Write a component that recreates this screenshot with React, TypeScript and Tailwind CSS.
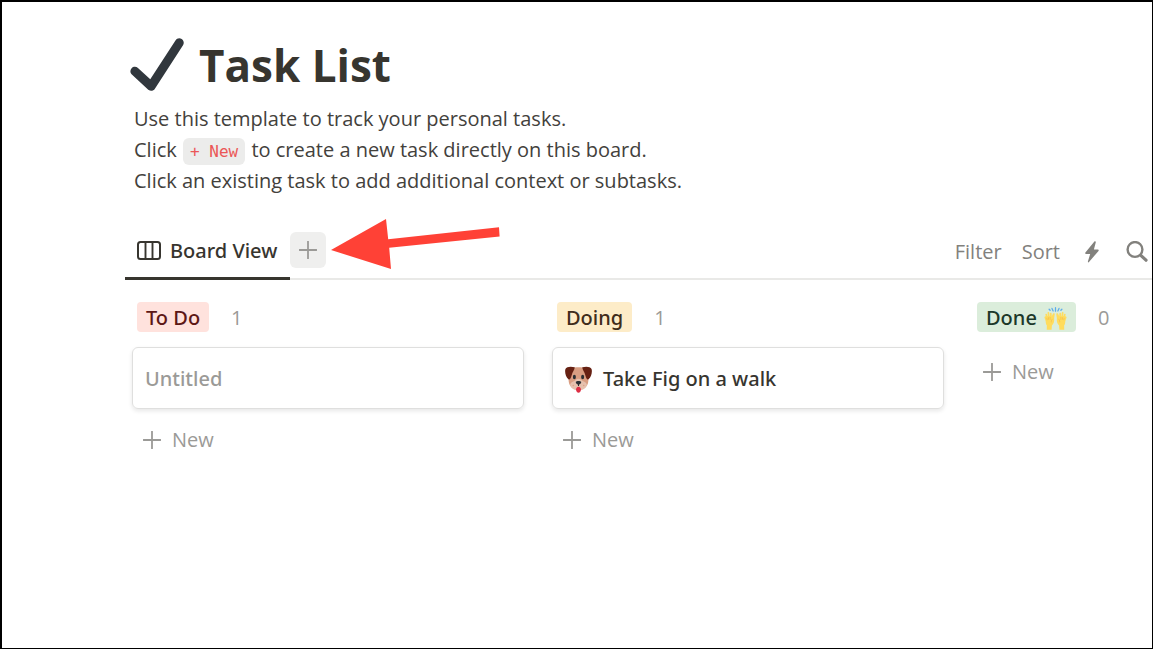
import { useState } from "react";

type Card = { title: string; icon?: boolean };
type Column = {
  name: string;
  hands?: boolean;
  tag: string;
  cards: Card[];
};

const columns: Column[] = [
  { name: "To Do", tag: "bg-[#ffe2dd] text-[#5d1715]", cards: [{ title: "" }] },
  {
    name: "Doing",
    tag: "bg-[#fdecc8] text-[#402c1b]",
    cards: [{ title: "Take Fig on a walk", icon: true }],
  },
  { name: "Done", hands: true, tag: "bg-[#dbeddb] text-[#1c3829]", cards: [] },
];

function CheckIcon() {
  return (
    <svg viewBox="0 0 36 36" className="size-[54px] shrink-0" aria-hidden="true">
      <path
        fill="#31373d"
        d="M34.459 1.375c-1.391-.902-3.248-.506-4.149.884L13.5 28.17l-8.198-7.58c-1.217-1.125-3.114-1.051-4.239.166-1.125 1.216-1.051 3.114.166 4.239l10.764 9.952s.309.266.452.359c.504.328 1.07.484 1.63.484.982 0 1.945-.482 2.52-1.368L35.343 5.524c.902-1.39.506-3.248-.884-4.149z"
      />
    </svg>
  );
}

function BoardIcon() {
  return (
    <svg viewBox="0 0 24 20" className="h-5 w-6 shrink-0" fill="none" stroke="#37352f" aria-hidden="true">
      <rect x="1" y="1" width="22" height="17" rx="2.5" strokeWidth="2" />
      <path d="M8.5 1v17M15.5 1v17" strokeWidth="1.9" />
    </svg>
  );
}

function PlusIcon() {
  return (
    <svg viewBox="0 0 18 18" className="size-[18px] shrink-0" stroke="currentColor" fill="none" aria-hidden="true">
      <path d="M9 .5v17M.5 9h17" strokeWidth="1.8" strokeLinecap="round" />
    </svg>
  );
}

function BoltIcon() {
  return (
    <svg viewBox="0 0 14 22" className="h-[22px] w-3.5" fill="currentColor" aria-hidden="true">
      <path d="M9.4.6.4 11.6c-.4.6-.2 1.3.6 1.3h4.2L2.9 20.5c-.2.9.5 1.3 1.1.6l9.5-11.2c.5-.6.2-1.3-.6-1.3H8.9l1.9-7.3C11 .4 10-.1 9.4.6z" />
    </svg>
  );
}

function SearchIcon() {
  return (
    <svg viewBox="0 0 22 22" className="size-[22px]" stroke="currentColor" fill="none" aria-hidden="true">
      <circle cx="9" cy="8.5" r="7.4" strokeWidth="2.4" />
      <path d="M14.8 14.3l5.2 4.9" strokeWidth="3.2" strokeLinecap="round" />
    </svg>
  );
}

function DogIcon() {
  return (
    <svg viewBox="0 0 36 36" className="size-[27px] shrink-0" aria-hidden="true">
      <path fill="#d99e82" d="M9 3c3-2 15-2 18 0 4 4 5 11 4 18-1 6-5 11-13 11S6 27 5 21C4 14 5 7 9 3z" />
      <path fill="#662113" d="M13 1.800C8 .2 2 .8.600 4c-1.300 4 .4 11 4 13.800 2.400.8 3.300-2.300 4.200-5.300C9.800 8.500 13 5 13 1.800zM23 1.800C28 .2 34 .8 35.400 4c1.300 4-.4 11-4 13.800-2.400.8-3.300-2.300-4.200-5.300C26.200 8.500 23 5 23 1.800z" />
      <path fill="#e6c1ae" d="M18 17c-3 0-4 2.500-7 3.500-3 1-4.500 3-4 5.500 2 4.500 6 6.500 11 6.500s9-2 11-6.500c.5-2.500-1-4.500-4-5.500-3-1-4-3.500-7-3.500z" />
      <ellipse cx="12.500" cy="14.500" rx="2" ry="3" fill="#292f33" />
      <ellipse cx="23.500" cy="14.500" rx="2" ry="3" fill="#292f33" />
      <path fill="#292f33" d="M14.500 21c1-1.500 6-1.500 7 0 .6 1.600-1 3-2.800 3.900v1.600h-1.400v-1.600C15.500 24 13.900 22.600 14.500 21z" />
      <path fill="#dd2e44" d="M18 27.500c1.500 0 3.300 1.500 3.300 3.700S19.800 35.500 18 35.500s-3.300-2.100-3.300-4.300 1.800-3.700 3.300-3.700z" />
      <g fill="#d99e82">
        <circle cx="11" cy="26" r=".9" />
        <circle cx="25" cy="26" r=".9" />
      </g>
    </svg>
  );
}

function Hand() {
  return (
    <g>
      <path fill="#ffdc5d" d="M3.500 19.500c-1.200-2.500-.2-5 2-5.500L12 15l2-4.500c1-1.200 3-.6 2.800 1l-.9 6c.3 5-.5 8.500-3.500 11.500l-.5 6.500H4.300l.2-6.500C2.500 26 2.300 23 3.500 19.500z" />
      <g stroke="#ffdc5d" strokeWidth="2.700" strokeLinecap="round">
        <path d="M2 16l2 6M3.500 11.800l2 8M6.800 9l1.200 9M10.600 10.200l.4 8" />
      </g>
      <path stroke="#efb048" strokeWidth=".8" fill="none" d="M4.300 17l.8 3.500M6.800 16l.5 4M9.500 15.500l.2 4.500M13.500 18.500c-1.700 1.500-2.200 3.500-2 5.500" />
    </g>
  );
}

function HandsIcon() {
  return (
    <svg viewBox="0 0 36 36" className="size-[23px] shrink-0" aria-hidden="true">
      <Hand />
      <g transform="matrix(-1 0 0 1 36 0)">
        <Hand />
      </g>
      <path fill="none" stroke="#5dadec" strokeWidth="2" strokeLinecap="round" d="M18 1v5.500M12.500 2.200l1.800 4M23.500 2.200l-1.800 4M8 3.500l1.600 1.600M28 3.500l-1.600 1.600" />
    </svg>
  );
}

function Arrow() {
  return (
    <svg
      viewBox="0 0 169 50"
      className="pointer-events-none absolute top-[-13px] left-[41px] h-[50px] w-[169px]"
      aria-hidden="true"
    >
      <path fill="#ff4136" d="M0 31L55 0l2.200 20.200L168 8.300l.6 9.200L58.200 28.800 60 50z" />
    </svg>
  );
}

function NewButton({ onClick }: { onClick: () => void }) {
  return (
    <button type="button" onClick={onClick} className="flex h-8 items-center gap-[11px] self-start pl-[11px] text-[#9b9a97]">
      <PlusIcon />
      <span>New</span>
    </button>
  );
}

export default function App() {
  const [board, setBoard] = useState(columns);

  const addCard = (name: string) => {
    setBoard((prev) =>
      prev.map((c) => (c.name === name ? { ...c, cards: [...c.cards, { title: "" }] } : c))
    );
  };

  return (
    <main className="min-h-screen overflow-hidden border-t-2 border-r border-b border-l-2 border-black bg-white pt-[34px] pl-[123px] font-['Open_Sans','Noto_Sans',sans-serif] text-[20px] text-[#37352f]">
      <header className="pl-[5px]">
        <div className="flex h-14 items-center gap-[15px]">
          <CheckIcon />
          <h1 className="pt-0.5 text-[44px] leading-[56px] font-bold">Task List</h1>
        </div>
        <div className="mt-[11px] pl-1 text-[20px] leading-[31px] text-[#43413c]">
          <p>Use this template to track your personal tasks.</p>
          <p>
            Click{" "}
            <code className="mx-px rounded-md bg-[#ececeb] px-[7px] py-1 font-['DejaVu_Sans_Mono',monospace] text-[16px] leading-none text-[#eb5757]">
              + New
            </code>{" "}
            to create a new task directly on this board.
          </p>
          <p>Click an existing task to add additional context or subtasks.</p>
        </div>
      </header>

      {/* View tabs */}
      <div className="mt-[29px] flex h-[55px] justify-between border-b-2 border-[#e9e9e7]">
        <div className="flex items-start">
          <button
            type="button"
            className="flex h-[55px] w-[165px] items-center gap-[9px] border-b-3 border-[#37352f] pl-3 font-['Noto_Sans',sans-serif] font-medium whitespace-nowrap"
          >
            <BoardIcon />
            Board View
          </button>
          <div className="relative mt-[7px]">
            <button
              type="button"
              aria-label="Add view"
              className="flex size-9 items-center justify-center rounded-md bg-[#efefee] text-[#9b9a97]"
            >
              <PlusIcon />
            </button>
            <Arrow />
          </div>
        </div>
        <div className="flex h-[53px] items-center pr-1 text-[#82817d]">
          <button type="button">Filter</button>
          <button type="button" className="ml-5">Sort</button>
          <button type="button" aria-label="Automations" className="ml-[25px]">
            <BoltIcon />
          </button>
          <button type="button" aria-label="Search" className="ml-[27px]">
            <SearchIcon />
          </button>
        </div>
      </div>

      {/* Board columns */}
      <div className="flex gap-7 pt-[22px] pl-[7px]">
        {board.map((column) => (
          <section key={column.name} className="flex w-[392px] shrink-0 flex-col">
            <div className="flex h-[30px] items-center gap-[22px] pl-[5px]">
              <h2 className={`flex h-[30px] items-center gap-[7px] rounded-sm px-[9px] pt-0.5 font-['Noto_Sans',sans-serif] font-medium ${column.tag}`}>
                {column.name}
                {column.hands && <HandsIcon />}
              </h2>
              <span className="pt-0.5 text-[#9b9a97]">{column.cards.length}</span>
            </div>
            <div className="mt-[15px] mb-[9px] flex flex-col">
              {column.cards.map((card, i) => (
                <article
                  key={i}
                  className="mb-1.5 flex h-[62px] items-center gap-[11px] rounded-md border border-[#dfdfde] px-3 pt-0.5 font-['Noto_Sans',sans-serif] font-medium shadow-[0_2px_4px_rgba(15,15,15,0.1)]"
                >
                  {card.icon && <DogIcon />}
                  <span className={card.title ? "" : "text-[#9b9a97]"}>{card.title || "Untitled"}</span>
                </article>
              ))}
            </div>
            <NewButton onClick={() => addCard(column.name)} />
          </section>
        ))}
      </div>
    </main>
  );
}
